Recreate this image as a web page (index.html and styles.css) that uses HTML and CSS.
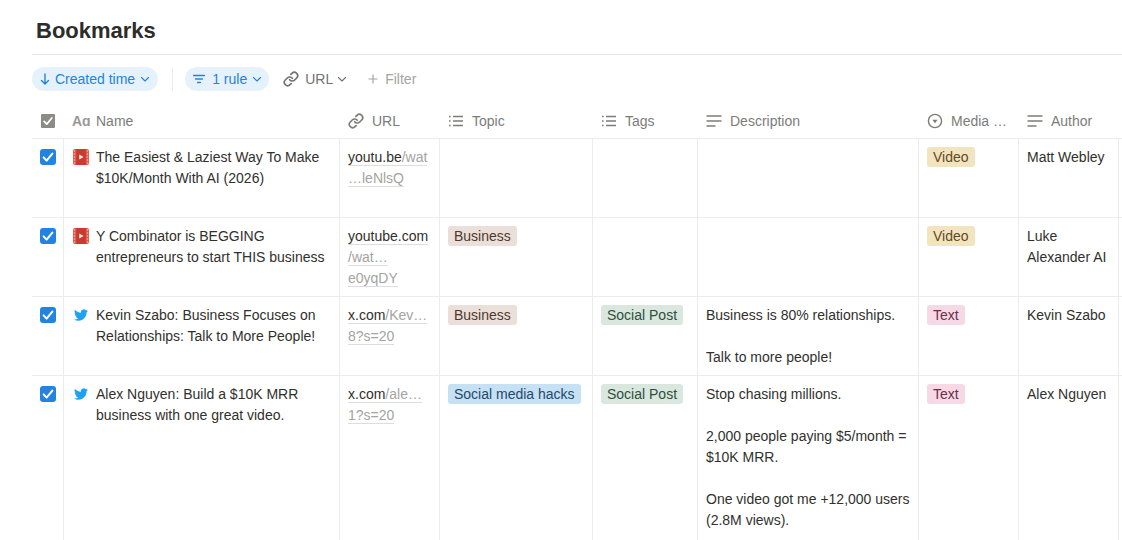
FILE: index.html
```html
<!DOCTYPE html>
<html lang="en">
<head>
  <meta charset="UTF-8" />
  <title>Bookmarks</title>
  <link rel="stylesheet" href="styles.css">
</head>
<body>

<svg class="defs" width="0" height="0">
  <defs>
    <symbol id="i-link" viewBox="0 0 24 24"><g fill="none" stroke="currentColor" stroke-width="2.5" stroke-linecap="round" stroke-linejoin="round"><path d="M10 13a5 5 0 0 0 7.54.54l3-3a5 5 0 0 0-7.07-7.07l-1.72 1.71"/><path d="M14 11a5 5 0 0 0-7.54-.54l-3 3a5 5 0 0 0 7.07 7.07l1.71-1.71"/></g></symbol>
    <symbol id="i-list" viewBox="0 0 16 16"><path d="M5 3.5h10M5 8h10M5 12.5h10" fill="none" stroke="currentColor" stroke-width="1.4"/><path d="M1 3.5h1.6M1 8h1.6M1 12.5h1.6" fill="none" stroke="currentColor" stroke-width="1.6"/></symbol>
    <symbol id="i-text" viewBox="0 0 16 16"><path d="M.5 3h15M.5 8h15M.5 13h9" fill="none" stroke="currentColor" stroke-width="1.5"/></symbol>
    <symbol id="i-chev" viewBox="0 0 10 10"><path d="M1.5 3.5 5 7l3.5-3.5" fill="none" stroke="currentColor" stroke-width="1.1" stroke-linecap="round" stroke-linejoin="round"/></symbol>
    <symbol id="i-check" viewBox="0 0 16 16"><path d="M3.6 8.4 6.6 11.6 12.4 4.6" fill="none" stroke="#fff" stroke-width="2" stroke-linecap="round" stroke-linejoin="round"/></symbol>
    <symbol id="i-film" viewBox="0 0 16 16">
      <rect x="0" y="0" width="16" height="16" rx="2" fill="#e2584c"/>
      <rect x="3.2" y="0" width="9.6" height="16" fill="#c93a2f"/>
      <path d="M6.2 5.4 10.6 8l-4.4 2.6z" fill="#fde8e4"/>
      <path d="M.8 2h1.4M.8 5h1.4M.8 8h1.4M.8 11h1.4M.8 14h1.4M13.8 2h1.4M13.8 5h1.4M13.8 8h1.4M13.8 11h1.4M13.8 14h1.4" stroke="#f8cdc7" stroke-width="1.2"/>
    </symbol>
    <symbol id="i-bird" viewBox="0 0 24 24"><path fill="#1da1f2" d="M23.953 4.57a10 10 0 01-2.825.775 4.958 4.958 0 002.163-2.723c-.951.555-2.005.959-3.127 1.184a4.92 4.92 0 00-8.384 4.482C7.69 8.095 4.067 6.13 1.64 3.162a4.822 4.822 0 00-.666 2.475c0 1.71.87 3.213 2.188 4.096a4.904 4.904 0 01-2.228-.616v.06a4.923 4.923 0 003.946 4.827 4.996 4.996 0 01-2.212.085 4.936 4.936 0 004.604 3.417 9.867 9.867 0 01-6.102 2.105c-.39 0-.779-.023-1.17-.067a13.995 13.995 0 007.557 2.209c9.053 0 13.998-7.496 13.998-13.985 0-.21 0-.42-.015-.63A9.935 9.935 0 0024 4.59z"/></symbol>
  </defs>
</svg>

<div class="page">
  <h1>Bookmarks</h1>

  <div class="toolbar">
    <div class="pill">
      <svg class="ico-sm" viewBox="0 0 12 12"><path d="M6 1v10M2.5 7.5 6 11l3.5-3.5" fill="none" stroke="currentColor" stroke-width="1.4" stroke-linecap="round" stroke-linejoin="round"/></svg>
      Created time
      <svg class="chev"><use href="#i-chev"/></svg>
    </div>
    <div class="divider"></div>
    <div class="pill rule">
      <svg class="ico-sm" viewBox="0 0 12 12"><path d="M.6 2.5h10.8M2.6 6h6.8M4.6 9.5h2.8" fill="none" stroke="currentColor" stroke-width="1.4" stroke-linecap="round"/></svg>
      1 rule
      <svg class="chev"><use href="#i-chev"/></svg>
    </div>
    <div class="plain">
      <svg class="ico-lg"><use href="#i-link"/></svg>
      URL
      <svg class="chev"><use href="#i-chev"/></svg>
    </div>
    <div class="plain muted">
      <svg class="ico-sm" viewBox="0 0 12 12"><path d="M6 1.5v9M1.5 6h9" fill="none" stroke="currentColor" stroke-width="1.2"/></svg>
      Filter
    </div>
  </div>

  <div class="table">
    <div class="row head">
      <div class="cell"><span class="head-check"><svg><use href="#i-check"/></svg></span></div>
      <div class="cell"><span class="aa">Aɑ</span>Name</div>
      <div class="cell"><svg class="ico-lg"><use href="#i-link"/></svg>URL</div>
      <div class="cell"><svg class="ico-lg"><use href="#i-list"/></svg>Topic</div>
      <div class="cell"><svg class="ico-lg"><use href="#i-list"/></svg>Tags</div>
      <div class="cell"><svg class="ico-lg"><use href="#i-text"/></svg>Description</div>
      <div class="cell">
        <svg class="ico-lg" viewBox="0 0 16 16"><circle cx="8" cy="8" r="6.6" fill="none" stroke="currentColor" stroke-width="1.4"/><path d="M5.4 6.8h5.2L8 10.2z" fill="currentColor"/></svg>
        Media …
      </div>
      <div class="cell"><svg class="ico-lg"><use href="#i-text"/></svg>Author</div>
    </div>

    <div class="row">
      <div class="cell"><span class="check"><svg><use href="#i-check"/></svg></span></div>
      <div class="cell name"><svg class="page-ico film"><use href="#i-film"/></svg><span>The Easiest &amp; Laziest Way To Make $10K/Month With AI (2026)</span></div>
      <div class="cell url"><span><a>youtu.be<i>/wat</i></a><br><a><i>…leNlsQ</i></a></span></div>
      <div class="cell"></div>
      <div class="cell"></div>
      <div class="cell"></div>
      <div class="cell"><span class="tag yellow">Video</span></div>
      <div class="cell">Matt Webley</div>
    </div>

    <div class="row">
      <div class="cell"><span class="check"><svg><use href="#i-check"/></svg></span></div>
      <div class="cell name"><svg class="page-ico film"><use href="#i-film"/></svg><span>Y Combinator is BEGGING entrepreneurs to start THIS business</span></div>
      <div class="cell url"><span><a>youtube.com</a><br><a><i>/wat…</i></a><br><a><i>e0yqDY</i></a></span></div>
      <div class="cell"><span class="tag brown">Business</span></div>
      <div class="cell"></div>
      <div class="cell"></div>
      <div class="cell"><span class="tag yellow">Video</span></div>
      <div class="cell">Luke Alexander AI</div>
    </div>

    <div class="row">
      <div class="cell"><span class="check"><svg><use href="#i-check"/></svg></span></div>
      <div class="cell name"><svg class="page-ico bird"><use href="#i-bird"/></svg><span>Kevin Szabo: Business Focuses on Relationships: Talk to More People!</span></div>
      <div class="cell url"><span><a>x.com<i>/Kev…</i></a><br><a><i>8?s=20</i></a></span></div>
      <div class="cell"><span class="tag brown">Business</span></div>
      <div class="cell"><span class="tag green">Social Post</span></div>
      <div class="cell">Business is 80% relationships.<br><br>Talk to more people!</div>
      <div class="cell"><span class="tag pink">Text</span></div>
      <div class="cell">Kevin Szabo</div>
    </div>

    <div class="row tall">
      <div class="cell"><span class="check"><svg><use href="#i-check"/></svg></span></div>
      <div class="cell name"><svg class="page-ico bird"><use href="#i-bird"/></svg><span>Alex Nguyen: Build a $10K MRR business with one great video.</span></div>
      <div class="cell url"><span><a>x.com<i>/ale…</i></a><br><a><i>1?s=20</i></a></span></div>
      <div class="cell"><span class="tag blue">Social media hacks</span></div>
      <div class="cell"><span class="tag green">Social Post</span></div>
      <div class="cell">Stop chasing millions.<br><br>2,000 people paying $5/month = $10K MRR.<br><br>One video got me +12,000 users (2.8M views).</div>
      <div class="cell"><span class="tag pink">Text</span></div>
      <div class="cell">Alex Nguyen</div>
    </div>
  </div>
</div>

</body>
</html>
```

FILE: styles.css
```css
* {
  box-sizing: border-box;
  margin: 0;
  padding: 0;
}

body {
  font-family: 'Liberation Sans', Arial, sans-serif;
  font-size: 14px;
  color: #32302c;
  background: #fff;
  height: 540px;
  overflow: hidden;
}

.defs {
  display: block;
}

.page {
  padding-left: 32px;
}

h1 {
  font-size: 22px;
  line-height: 26px;
  font-weight: 700;
  color: #2c2c2b;
  padding: 18px 0 10px 4px;
  border-bottom: 1px solid #e6e6e4;
}

/* toolbar */
.toolbar {
  display: flex;
  align-items: center;
  height: 24px;
  margin-top: 12px;
  margin-bottom: 12px;
}

.pill {
  display: flex;
  align-items: center;
  gap: 4px;
  height: 24px;
  padding: 0 8px 0 7px;
  border-radius: 12px;
  background: #e6f2fb;
  color: #2383e2;
  margin-right: 4px;
}

.pill .chev {
  margin-left: 1px;
}

.pill.rule {
  padding: 0 7px 0 8px;
}

.pill.rule .ico-sm {
  margin-right: 3px;
}

.plain {
  display: flex;
  align-items: center;
  gap: 6px;
  height: 24px;
  padding: 0 7px 0 10px;
  color: #73726e;
}

.plain .chev {
  margin-left: -2px;
}

.plain.muted {
  color: #a5a4a0;
  gap: 6px;
  padding-left: 13px;
}

.divider {
  width: 1px;
  height: 24px;
  background: #ececea;
  margin: 0 12px 0 10px;
}

.ico-sm { width: 12px; height: 12px; }
.ico-lg { width: 16px; height: 16px; flex: none; }
.chev { width: 10px; height: 10px; }

/* table */
.row {
  display: grid;
  grid-template-columns: 32px 276px 100px 153px 105px 221px 100px 100px;
  height: 79px;
  border-bottom: 1px solid #ececea;
}

.row.head {
  height: 36px;
  color: #7d7c78;
}

.row.tall {
  height: 164px;
  border-bottom: none;
}

.cell {
  border-right: 1px solid #ececea;
  padding: 8px 8px 0;
  line-height: 21px;
}

.head .cell {
  display: flex;
  align-items: center;
  gap: 8px;
  padding: 1px 8px 0;
  border-right: none;
}

.head .cell:first-child {
  padding-left: 9px;
}

.head-check {
  display: block;
  width: 14px;
  height: 14px;
  border-radius: 1px;
  background: #8d8b87;
}

.head-check svg {
  display: block;
  width: 14px;
  height: 14px;
}

.aa {
  font-weight: 700;
  font-size: 14px;
  width: 16px;
  white-space: nowrap;
  color: #9a9894;
}

.check {
  display: block;
  width: 16px;
  height: 16px;
  border-radius: 3px;
  background: #2383e2;
  margin-top: 2px;
}

.check svg {
  display: block;
  width: 16px;
  height: 16px;
}

.name {
  display: flex;
  gap: 8px;
}

.page-ico {
  flex: none;
  width: 16px;
  height: 16px;
  margin-top: 2px;
}

.page-ico.film {
  margin-left: 1px;
  margin-right: -1px;
}

.page-ico.bird {
  width: 14px;
  height: 14px;
  margin-left: 2px;
  margin-top: 3px;
}

.url a {
  border-bottom: 1px solid #dedddb;
}

.url i {
  font-style: normal;
  color: #a5a4a0;
}

.tag {
  display: inline-block;
  height: 20px;
  line-height: 20px;
  padding: 0 6px;
  border-radius: 3px;
  white-space: nowrap;
}

.yellow { background: #f3e4c0; color: #5f4a1f; }
.brown { background: #ebdfd9; color: #4f392e; }
.green { background: #d9e7de; color: #2f4e3c; }
.pink { background: #f6d9e4; color: #6d2f4b; }
.blue { background: #c6e0f4; color: #1f4a6b; }
```
